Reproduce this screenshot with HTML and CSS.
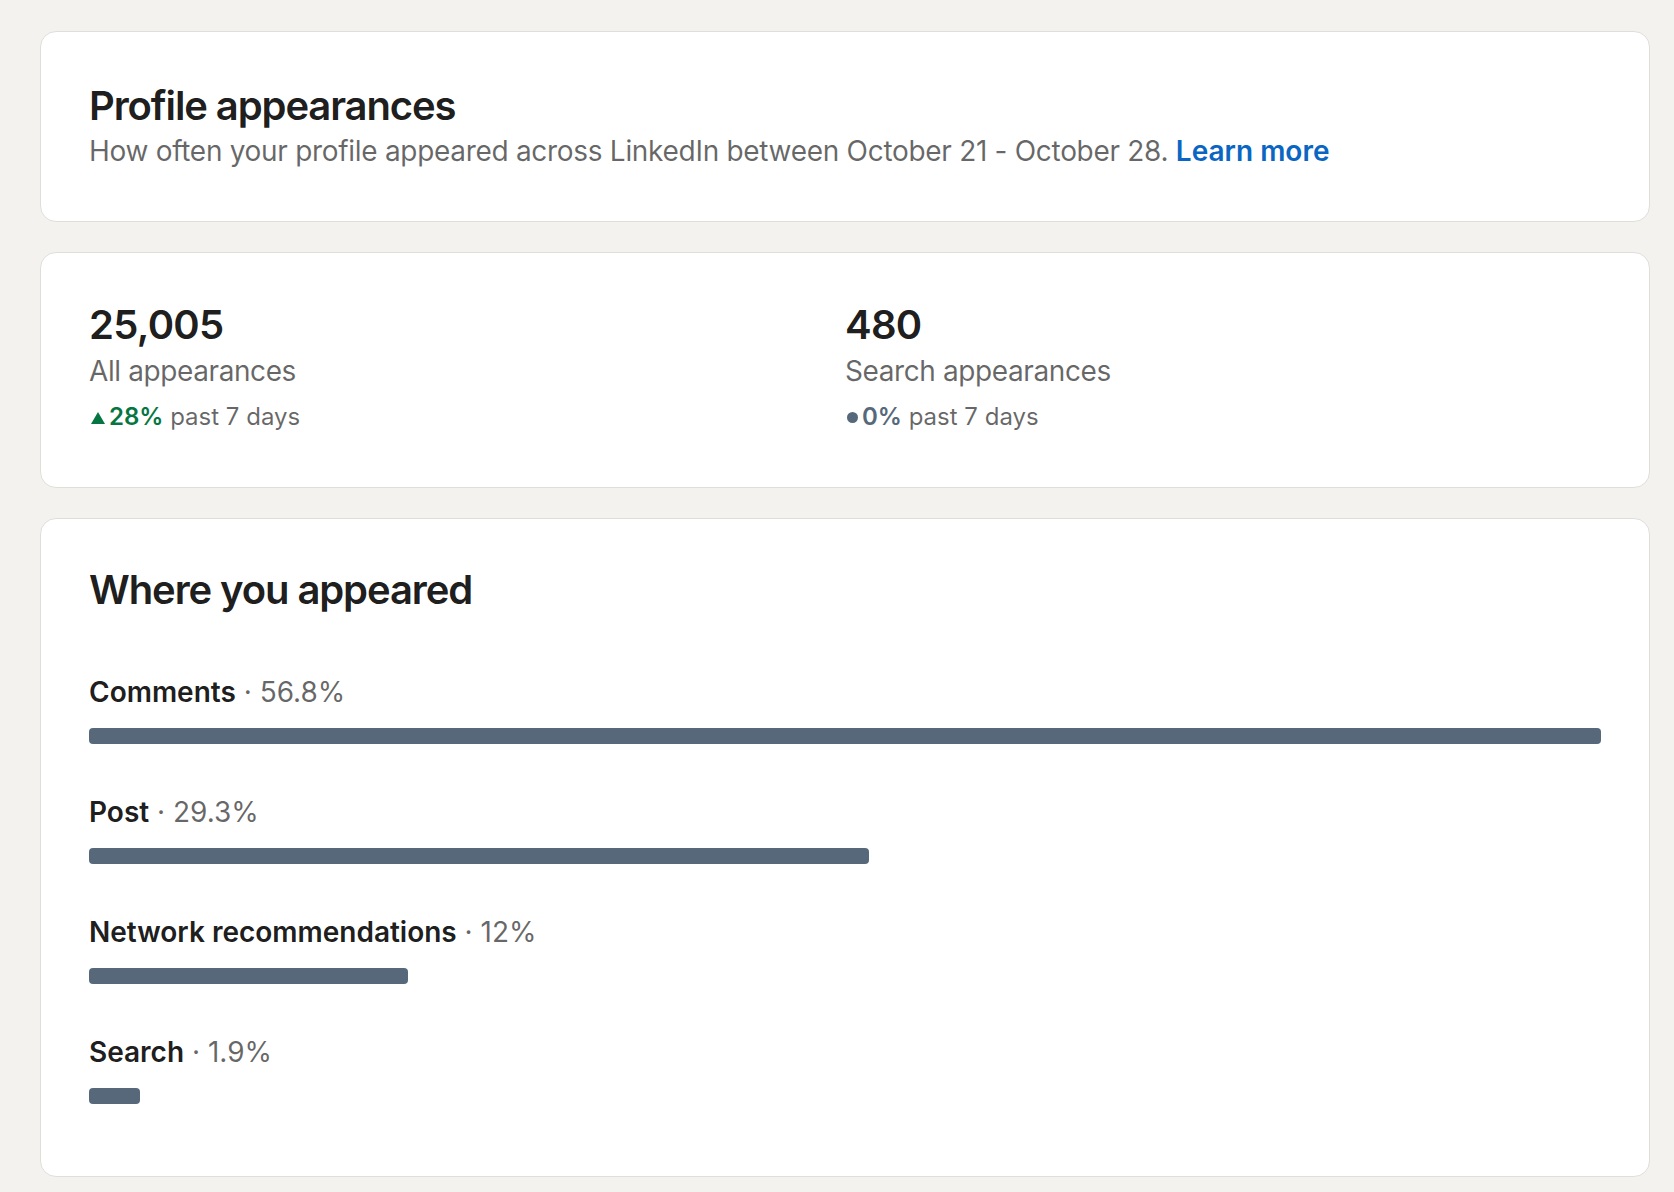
FILE: index.html
```html
<!DOCTYPE html>
<html lang="en">
<head>
<meta charset="utf-8">
<title>Profile appearances</title>
<link rel="stylesheet" href="styles.css">
</head>
<body>
<main class="column">
  <section class="card intro">
    <h1 class="title">Profile appearances</h1>
    <p class="subtitle">How often your profile appeared across LinkedIn between October 21 - October 28. <a class="link" href="#">Learn more</a></p>
  </section>

  <section class="card stats">
    <div class="stat">
      <div class="stat-value">25,005</div>
      <div class="stat-label">All appearances</div>
      <div class="stat-trend"><span class="trend-up"><span class="tri"></span>28%</span> past 7 days</div>
    </div>
    <div class="stat">
      <div class="stat-value">480</div>
      <div class="stat-label">Search appearances</div>
      <div class="stat-trend"><span class="trend-flat"><span class="dot"></span>0%</span> past 7 days</div>
    </div>
  </section>

  <section class="card where">
    <h2 class="title">Where you appeared</h2>
    <ul class="bars">
      <li class="bar-row">
        <div class="bar-label"><strong>Comments</strong> · 56.8%</div>
        <div class="bar-track"><div class="bar-fill" style="width:100%"></div></div>
      </li>
      <li class="bar-row">
        <div class="bar-label"><strong>Post</strong> · 29.3%</div>
        <div class="bar-track"><div class="bar-fill" style="width:51.58%"></div></div>
      </li>
      <li class="bar-row">
        <div class="bar-label"><strong>Network recommendations</strong> · 12%</div>
        <div class="bar-track"><div class="bar-fill" style="width:21.13%"></div></div>
      </li>
      <li class="bar-row">
        <div class="bar-label"><strong>Search</strong> · 1.9%</div>
        <div class="bar-track"><div class="bar-fill" style="width:3.35%"></div></div>
      </li>
    </ul>
  </section>
</main>
</body>
</html>
```

FILE: styles.css
```css
* { box-sizing: border-box; }

html, body {
  margin: 0;
  padding: 0;
  background: #f3f2ef;
}

body {
  font-family: Inter, "Noto Sans", "Liberation Sans", sans-serif;
  color: rgba(0, 0, 0, 0.9);
  -webkit-font-smoothing: antialiased;
}

.column {
  width: 1610px;
  margin-left: 40px;
  padding-top: 31px;
  display: flex;
  flex-direction: column;
  gap: 30px;
}

.card {
  background: #ffffff;
  border: 1px solid #dfdedb;
  border-radius: 16px;
  padding: 50px 48px;
}

.title {
  margin: 0;
  font-size: 40px;
  line-height: 48px;
  font-weight: 600;
  letter-spacing: -1.1px;
  color: rgba(0, 0, 0, 0.9);
}

.subtitle {
  margin: 1px 0 0;
  font-size: 28px;
  line-height: 40px;
  letter-spacing: -0.3px;
  color: rgba(0, 0, 0, 0.6);
}

.link {
  color: #0a66c2;
  font-weight: 600;
  letter-spacing: 0;
  text-decoration: none;
}

.stats {
  display: grid;
  grid-template-columns: 1fr 1fr;
  padding-top: 48px;
  padding-bottom: 54px;
}

.stat-value {
  font-size: 40px;
  line-height: 48px;
  font-weight: 600;
  letter-spacing: -0.7px;
  color: rgba(0, 0, 0, 0.9);
}

.stat-label {
  margin-top: 2px;
  font-size: 28px;
  line-height: 40px;
  letter-spacing: -0.4px;
  color: rgba(0, 0, 0, 0.6);
}

.stat-trend {
  margin-top: 10px;
  font-size: 24px;
  line-height: 32px;
  color: rgba(0, 0, 0, 0.6);
}

.trend-up {
  color: #057642;
  font-weight: 600;
}

.trend-flat {
  color: #56687a;
  font-weight: 600;
}

.tri {
  display: inline-block;
  width: 0;
  height: 0;
  border-left: 7px solid transparent;
  border-right: 7px solid transparent;
  border-bottom: 12px solid #057642;
  margin-left: 2px;
  margin-right: 4px;
  vertical-align: 1px;
}

.dot {
  display: inline-block;
  width: 11px;
  height: 11px;
  border-radius: 50%;
  background: #56687a;
  margin-left: 2px;
  margin-right: 4px;
  vertical-align: 2px;
}

.where {
  padding-top: 47px;
  padding-bottom: 48px;
}

.bars {
  list-style: none;
  margin: 58px 0 24px;
  padding: 0;
  display: flex;
  flex-direction: column;
  gap: 48px;
}

.bar-label {
  font-size: 28px;
  line-height: 40px;
  color: rgba(0, 0, 0, 0.6);
}

.bar-label strong {
  font-weight: 600;
  color: rgba(0, 0, 0, 0.9);
}

.bar-track {
  margin-top: 16px;
  height: 16px;
}

.bar-fill {
  height: 16px;
  background: #56687a;
  border-radius: 4px;
}
```
